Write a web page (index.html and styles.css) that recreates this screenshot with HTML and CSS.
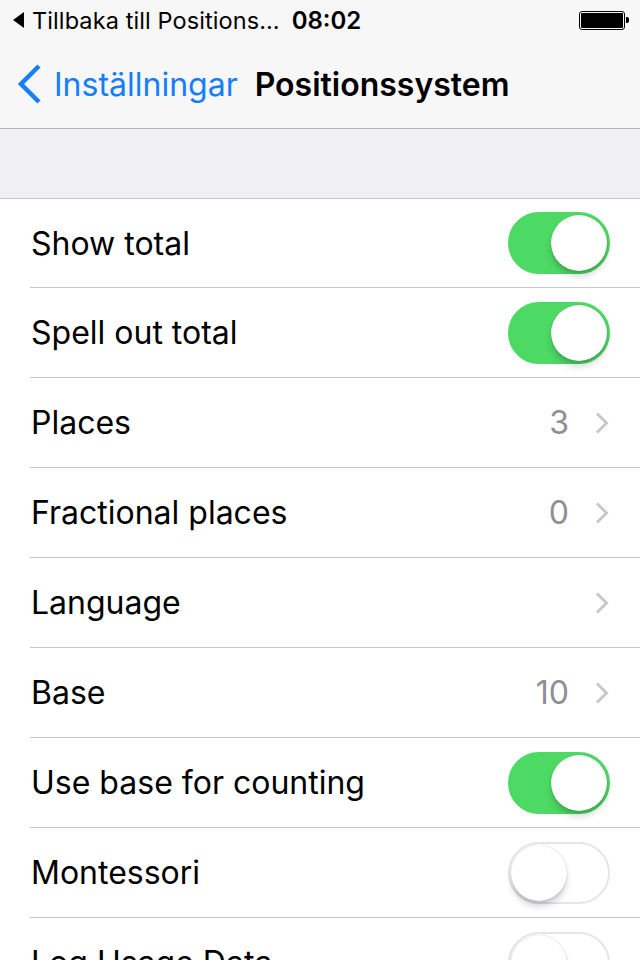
FILE: index.html
```html
<!DOCTYPE html>
<html lang="sv">
<head>
  <meta charset="UTF-8">
  <meta name="viewport" content="width=device-width, initial-scale=1.0">
  <title>Positionssystem</title>
  <link rel="stylesheet" href="styles.css">
</head>
<body>
  <div class="top">
    <div class="status">
      <span class="back-app">
        <svg class="tri" width="11" height="16" viewBox="0 0 11 16"><path d="M11 0 L0 8 L11 16 Z" fill="#000"/></svg>
        Tillbaka till Positions…
      </span>
      <span class="time">08:02</span>
      <span class="battery"><span class="battery-fill"></span></span>
    </div>
    <div class="nav">
      <a class="nav-back">
        <svg width="28" height="42" viewBox="0 0 28 42"><path d="M24 3 L6 21 L24 39" fill="none" stroke="#147efb" stroke-width="4.5"/></svg>
        <span>Inställningar</span>
      </a>
      <span class="nav-title">Positionssystem</span>
    </div>
  </div>

  <div class="section-gap"></div>

  <ul class="list">
    <li class="row">
      <span class="label">Show total</span>
      <span class="switch on"><span class="knob"></span></span>
    </li>
    <li class="row">
      <span class="label">Spell out total</span>
      <span class="switch on"><span class="knob"></span></span>
    </li>
    <li class="row">
      <span class="label">Places</span>
      <span class="value">3</span>
      <svg class="chevron" width="14" height="22" viewBox="0 0 14 22"><path d="M2 1.5 L11.5 11 L2 20.5" fill="none" stroke="#c7c7cc" stroke-width="3"/></svg>
    </li>
    <li class="row">
      <span class="label">Fractional places</span>
      <span class="value">0</span>
      <svg class="chevron" width="14" height="22" viewBox="0 0 14 22"><path d="M2 1.5 L11.5 11 L2 20.5" fill="none" stroke="#c7c7cc" stroke-width="3"/></svg>
    </li>
    <li class="row">
      <span class="label">Language</span>
      <svg class="chevron" width="14" height="22" viewBox="0 0 14 22"><path d="M2 1.5 L11.5 11 L2 20.5" fill="none" stroke="#c7c7cc" stroke-width="3"/></svg>
    </li>
    <li class="row">
      <span class="label">Base</span>
      <span class="value">10</span>
      <svg class="chevron" width="14" height="22" viewBox="0 0 14 22"><path d="M2 1.5 L11.5 11 L2 20.5" fill="none" stroke="#c7c7cc" stroke-width="3"/></svg>
    </li>
    <li class="row">
      <span class="label">Use base for counting</span>
      <span class="switch on"><span class="knob"></span></span>
    </li>
    <li class="row">
      <span class="label">Montessori</span>
      <span class="switch"><span class="knob"></span></span>
    </li>
    <li class="row">
      <span class="label">Log Usage Data</span>
      <span class="switch"><span class="knob"></span></span>
    </li>
  </ul>
</body>
</html>
```

FILE: styles.css
```css
body {
  margin: 0;
  font-family: Inter, "Noto Sans", sans-serif;
  background-color: #efeff4;
  color: #000;
  overflow: hidden;
  height: 960px;
}

.top {
  background-color: #f7f7f7;
  border-bottom: 1px solid #b2b2b2;
}

.status {
  height: 40px;
  display: flex;
  align-items: center;
  font-size: 23.5px;
  padding: 0 13px;
}

.back-app {
  display: flex;
  align-items: center;
  gap: 8px;
  letter-spacing: 0.1px;
}

.time {
  font-weight: 600;
  font-size: 24px;
  margin-left: 12px;
}

.battery {
  margin-left: auto;
  width: 42px;
  height: 15px;
  border: 1px solid #000;
  border-radius: 3px;
  padding: 1px;
  position: relative;
  margin-right: 2px;
}

.battery::after {
  content: "";
  position: absolute;
  right: -5px;
  top: 5px;
  width: 3px;
  height: 6px;
  background: #000;
  border-radius: 0 2px 2px 0;
}

.battery-fill {
  display: block;
  height: 100%;
  background: #000;
  border-radius: 1px;
}

.nav {
  height: 88px;
  display: flex;
  align-items: center;
  padding-left: 15px;
  font-size: 32px;
}

.nav-back {
  display: flex;
  align-items: center;
  gap: 11px;
  color: #147efb;
}

.nav-title {
  font-weight: 600;
  margin-left: 17px;
}

.section-gap {
  height: 69px;
}

.list {
  list-style: none;
  margin: 0;
  padding: 0;
  background: #fff;
  border-top: 1px solid #c8c7cc;
}

.row {
  height: 90px;
  box-sizing: border-box;
  margin-left: 30px;
  padding-right: 30px;
  border-bottom: 1px solid #c8c7cc;
  display: flex;
  align-items: center;
  font-size: 32px;
}

.row:first-child {
  height: 89px;
}

.label {
  margin-left: 1px;
  margin-right: auto;
}

.value {
  color: #8e8e93;
  margin-right: 26px;
}

.chevron {
  margin-right: 1px;
}

.switch {
  width: 102px;
  height: 62px;
  box-sizing: border-box;
  border-radius: 31px;
  border: 2px solid #e5e5ea;
  background: #fff;
  position: relative;
}

.switch.on {
  background: #4cd964;
  border-color: #4cd964;
}

.knob {
  position: absolute;
  top: 1px;
  left: 1px;
  width: 56px;
  height: 56px;
  border-radius: 50%;
  background: #fff;
  box-shadow: 0 6px 6px rgba(0, 0, 0, 0.15), 0 0 1px rgba(0, 0, 0, 0.3), 0 3px 1px rgba(0, 0, 0, 0.06);
}

.switch.on .knob {
  left: auto;
  right: 1px;
}
```
